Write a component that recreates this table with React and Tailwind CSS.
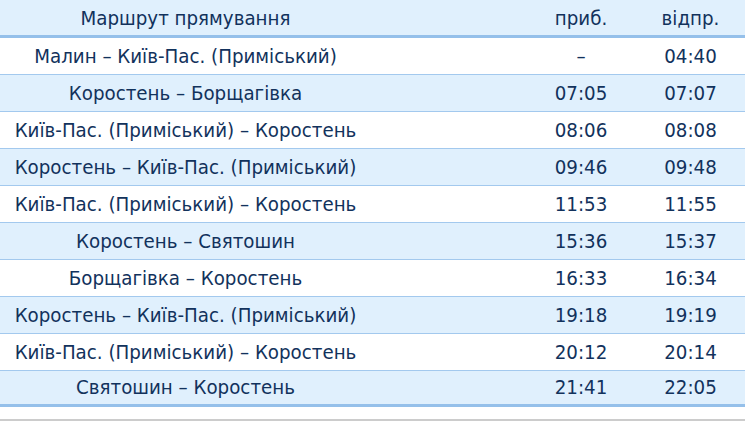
import React from "react";

const rows = [
  ["Малин – Київ-Пас. (Приміський)", "–", "04:40"],
  ["Коростень – Борщагівка", "07:05", "07:07"],
  ["Київ-Пас. (Приміський) – Коростень", "08:06", "08:08"],
  ["Коростень – Київ-Пас. (Приміський)", "09:46", "09:48"],
  ["Київ-Пас. (Приміський) – Коростень", "11:53", "11:55"],
  ["Коростень – Святошин", "15:36", "15:37"],
  ["Борщагівка – Коростень", "16:33", "16:34"],
  ["Коростень – Київ-Пас. (Приміський)", "19:18", "19:19"],
  ["Київ-Пас. (Приміський) – Коростень", "20:12", "20:14"],
  ["Святошин – Коростень", "21:41", "22:05"],
];

export default function App() {
  return (
    <div
      className="w-[745px] h-[423px] bg-white text-[#12325c] text-[20.3px] leading-none overflow-hidden"
      style={{ fontFamily: '"DejaVu Sans Condensed", "DejaVu Sans", sans-serif' }}
    >
      <div className="grid grid-cols-[371px_155px_110px_109px] items-center h-[34px] pt-[1px] bg-[#e0f0fd] border-b-[3px] border-[#95c0ea] box-content">
        <div className="text-center">Маршрут прямування</div>
        <div />
        <div className="text-center">приб.</div>
        <div className="text-center">відпр.</div>
      </div>
      {rows.map((r, i) => (
        <div
          key={i}
          className={
            "grid grid-cols-[371px_155px_110px_109px] items-center box-content " +
            (i % 2 === 1 ? "bg-[#e0f0fd] " : "bg-white ") +
            (i === rows.length - 1
              ? "h-[33px] border-b-[3px] border-[#95c0ea]"
              : "h-[36px] border-b border-[#a3c9ee]")
          }
        >
          <div className="text-center">{r[0]}</div>
          <div />
          <div className="text-center">{r[1]}</div>
          <div className="text-center">{r[2]}</div>
        </div>
      ))}
      <div className="h-[12px]" />
      <div className="h-[2px] bg-[#cccccc]" />
    </div>
  );
}
